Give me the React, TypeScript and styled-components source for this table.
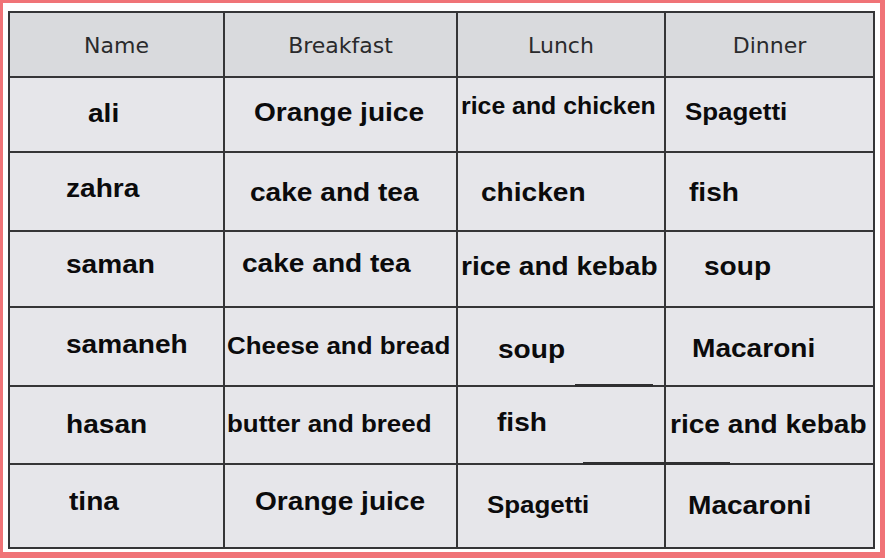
import React from "react";
import styled, { createGlobalStyle } from "styled-components";

const Global = createGlobalStyle`
  html, body { margin: 0; padding: 0; background: #ffffff; }
  #root { width: 885px; height: 558px; }
`;

const Frame = styled.div`
  box-sizing: border-box;
  width: 885px;
  height: 558px;
  border-style: solid;
  border-color: #f07377;
  border-width: 3px 5px 6px 3px;
  padding: 8px 5px 3px 5px;
  background: #ffffff;
`;

const Table = styled.div`
  position: relative;
  display: grid;
  grid-template-columns: 213px 231px 206px 207px;
  grid-template-rows: 63px 73px 77px 74px 77px 76px 82px;
  gap: 2px;
  padding: 2px;
  width: max-content;
  background: #353537;
`;

const HeadCell = styled.div`
  display: flex;
  align-items: center;
  justify-content: center;
  padding-top: 2px;
  box-sizing: border-box;
  background: #d9dadd;
  color: #2a2a2c;
  font-family: "DejaVu Sans", "Liberation Sans", sans-serif;
  font-weight: 400;
  font-size: 22px;
`;

const Cell = styled.div<{ $x: number; $y: number }>`
  box-sizing: border-box;
  background: #e6e6ea;
  padding-left: ${(p) => p.$x}px;
  padding-top: ${(p) => p.$y}px;
  overflow: visible;
  white-space: nowrap;
`;

const Text = styled.span<{ $size: number }>`
  display: inline-block;
  font-family: "Liberation Sans", Arial, sans-serif;
  font-weight: 700;
  font-size: ${(p) => p.$size}px;
  line-height: 1;
  color: #0b0b0c;
  transform: scaleX(1.08);
  transform-origin: left center;
`;

const Mark = styled.div<{ $left: number; $top: number; $w: number }>`
  position: absolute;
  left: ${(p) => p.$left}px;
  top: ${(p) => p.$top}px;
  width: ${(p) => p.$w}px;
  height: 3px;
  background: #2f2f31;
`;

type C = { t: string; x: number; y: number; s?: number };

const rows: C[][] = [
  [
    { t: "ali", x: 78, y: 22 },
    { t: "Orange juice", x: 29, y: 21 },
    { t: "rice and chicken", x: 3, y: 17, s: 23 },
    { t: "Spagetti", x: 19, y: 22, s: 24 },
  ],
  [
    { t: "zahra", x: 56, y: 22 },
    { t: "cake and tea", x: 25, y: 26 },
    { t: "chicken", x: 23, y: 26 },
    { t: "fish", x: 23, y: 26 },
  ],
  [
    { t: "saman", x: 56, y: 19 },
    { t: "cake and tea", x: 17, y: 18 },
    { t: "rice and kebab", x: 3, y: 21 },
    { t: "soup", x: 38, y: 21 },
  ],
  [
    { t: "samaneh", x: 56, y: 23 },
    { t: "Cheese and bread", x: 2, y: 26, s: 24 },
    { t: "soup", x: 40, y: 28 },
    { t: "Macaroni", x: 26, y: 27, s: 26 },
  ],
  [
    { t: "hasan", x: 56, y: 24 },
    { t: "butter and breed", x: 2, y: 25, s: 24 },
    { t: "fish", x: 39, y: 22 },
    { t: "rice and kebab", x: 4, y: 24 },
  ],
  [
    { t: "tina", x: 59, y: 23 },
    { t: "Orange juice", x: 30, y: 23 },
    { t: "Spagetti", x: 29, y: 28, s: 24 },
    { t: "Macaroni", x: 22, y: 27, s: 26 },
  ],
];

const heads = ["Name", "Breakfast", "Lunch", "Dinner"];

export default function App() {
  return (
    <>
      <Global />
      <Frame>
        <Table>
          {heads.map((h) => (
            <HeadCell key={h}>{h}</HeadCell>
          ))}
          {rows.map((r, i) =>
            r.map((c, j) => (
              <Cell key={`${i}-${j}`} $x={c.x} $y={c.y}>
                <Text $size={c.s ?? 26}>{c.t}</Text>
              </Cell>
            ))
          )}
          <Mark $left={567} $top={373} $w={78} />
          <Mark $left={575} $top={451} $w={147} />
        </Table>
      </Frame>
    </>
  );
}
